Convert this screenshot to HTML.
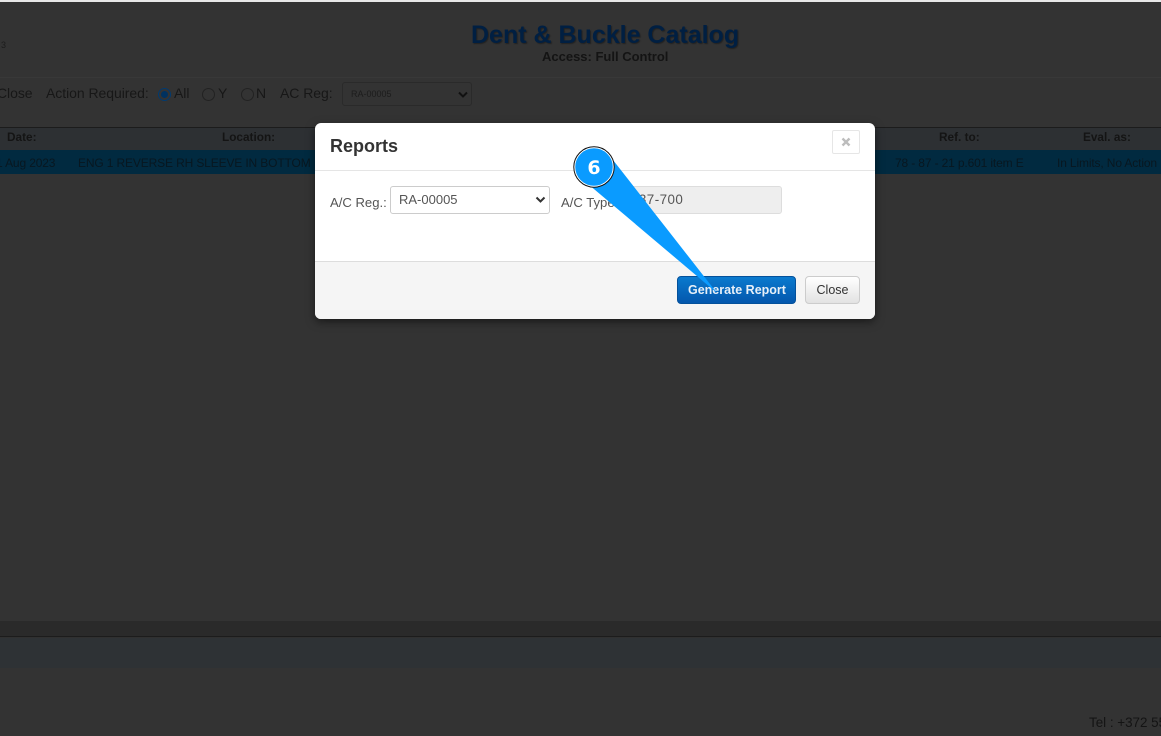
<!DOCTYPE html>
<html><head><meta charset="utf-8">
<style>
html,body{margin:0;padding:0;width:1161px;height:736px;overflow:hidden;background:#333;font-family:"Liberation Sans",sans-serif}
.a{position:absolute;white-space:nowrap}
.d{color:#161616}
.t{font-size:14px;line-height:16px;color:#171717;top:85px;letter-spacing:-.05px}
.h{font-size:11.8px;line-height:14px;font-weight:bold;color:#141414;top:130px}
.r{font-size:12px;line-height:14px;color:#081720;top:6px;letter-spacing:-.14px}
</style></head><body>
<div class="a" style="left:0;top:0;width:1161px;height:2px;background:#e8e8e8"></div>
<div class="a" style="left:1px;top:40px;font-size:9px;color:#1c1c1c">3</div>
<div class="a" style="left:471px;top:20px;font-size:25px;line-height:30px;font-weight:bold;color:#001f42;text-shadow:1px 1px 1px #222">Dent &amp; Buckle Catalog</div>
<div class="a" style="left:542px;top:49px;font-size:13px;line-height:15px;font-weight:bold;color:#141414;">Access: Full Control</div>
<div class="a" style="left:0;top:77px;width:1161px;height:1px;background:#383838"></div>

<div class="a t" style="left:-3px">Close</div>
<div class="a t" style="left:46px">Action Required:</div>
<div class="a" style="left:158px;top:88px;width:13px;height:13px;border-radius:50%;border:1px solid #003a70;box-sizing:border-box"></div>
<div class="a" style="left:161px;top:91px;width:7px;height:7px;border-radius:50%;background:#00315f"></div>
<div class="a t" style="left:174px">All</div>
<div class="a" style="left:202px;top:88px;width:13px;height:13px;border-radius:50%;border:1px solid #222;box-sizing:border-box"></div>
<div class="a t" style="left:218px">Y</div>
<div class="a" style="left:241px;top:88px;width:13px;height:13px;border-radius:50%;border:1px solid #222;box-sizing:border-box"></div>
<div class="a t" style="left:256px">N</div>
<div class="a t" style="left:280px">AC Reg:</div>
<div class="a" style="left:342px;top:82px;width:130px;height:24px;box-sizing:border-box;border:1px solid #2a2a2a;border-radius:3px"></div>
<div class="a" style="left:351px;top:89px;font-size:9px;line-height:11px;color:#1c1c1c">RA-00005</div>
<svg class="a" style="left:458px;top:91px" width="10" height="7" viewBox="0 0 10 7"><path d="M1 1.5L5 5.5L9 1.5" fill="none" stroke="#111" stroke-width="2"/></svg>

<div class="a" style="left:0;top:127px;width:1161px;height:1px;background:#1c1c1c"></div>
<div class="a" style="left:0;top:128px;width:1161px;height:22px;background:#2d3033"></div>
<div class="a h" style="left:7px">Date:</div>
<div class="a h" style="left:222px">Location:</div>
<div class="a h" style="left:939px">Ref. to:</div>
<div class="a h" style="left:1083px">Eval. as:</div>
<div class="a" style="left:0;top:150px;width:1161px;height:24px;background:#012a40;overflow:hidden">
<div class="a r" style="left:-4px">1 Aug 2023</div>
<div class="a r" style="left:78px">ENG 1 REVERSE RH SLEEVE IN BOTTOM</div>
<div class="a r" style="left:895px">78 - 87 - 21 p.601 item E</div>
<div class="a r" style="left:1057px">In Limits, No Action</div>
</div>

<div class="a" style="left:0;top:621px;width:1161px;height:15px;background:#2a2a2a"></div>
<div class="a" style="left:0;top:636px;width:1161px;height:1px;background:#1c1c1c"></div>
<div class="a" style="left:0;top:637px;width:1161px;height:1px;background:#303030"></div>
<div class="a" style="left:0;top:638px;width:1161px;height:30px;background:#2e3235"></div>
<div class="a" style="left:1089px;top:715px;font-size:13.4px;line-height:16px;color:#141414">Tel : +372 55</div>

<div class="a" style="left:315px;top:123px;width:560px;height:196px;background:#fff;border-radius:6px;overflow:hidden;box-shadow:0 3px 9px rgba(0,0,0,.5)">
 <div class="a" style="left:15px;top:13px;font-size:18px;line-height:20px;font-weight:bold;color:#333">Reports</div>
 <div class="a" style="left:517px;top:7px;width:28px;height:24px;box-sizing:border-box;border:1px solid #e6e6e6;border-radius:2px;background:#fff"></div>
 <svg class="a" style="left:526px;top:14px" width="10" height="10" viewBox="0 0 10 10"><path d="M1.5 1.5L8.5 8.5M8.5 1.5L1.5 8.5" stroke="#bdbdbd" stroke-width="2.4" fill="none"/></svg>
 <div class="a" style="left:0;top:47px;width:560px;height:1px;background:#e5e5e5"></div>
 <div class="a" style="left:15px;top:72px;font-size:13.1px;line-height:16px;color:#555">A/C Reg.:</div>
 <div class="a" style="left:75px;top:63px;width:160px;height:28px;box-sizing:border-box;border:1px solid #ccc;border-radius:3px;background:#fff"></div>
 <div class="a" style="left:84px;top:69px;font-size:13px;line-height:16px;color:#555">RA-00005</div>
 <svg class="a" style="left:220px;top:73px" width="11" height="8" viewBox="0 0 11 8"><path d="M1.5 1.5L5.5 5.5L9.5 1.5" fill="none" stroke="#333" stroke-width="2"/></svg>
 <div class="a" style="left:246px;top:72px;font-size:13.1px;line-height:16px;color:#555">A/C Type:</div>
 <div class="a" style="left:307px;top:63px;width:160px;height:28px;box-sizing:border-box;border:1px solid #ddd;border-radius:3px;background:#eee"></div>
 <div class="a" style="left:316px;top:69px;font-size:13.4px;line-height:16px;color:#555;letter-spacing:.45px">737-700</div>
 <div class="a" style="left:0;top:138px;width:560px;height:58px;box-sizing:border-box;border-top:1px solid #ddd;background:#f5f5f5"></div>
 <div class="a" style="left:362px;top:153px;width:119px;height:28px;box-sizing:border-box;border:1px solid #04519b;border-radius:4px;background:linear-gradient(#0a7ace,#0457ad)"></div>
 <div class="a" style="left:373px;top:159px;font-size:12.5px;line-height:16px;font-weight:bold;color:#e8f0f8">Generate Report</div>
 <div class="a" style="left:490px;top:153px;width:55px;height:28px;box-sizing:border-box;border:1px solid #ccc;border-radius:4px;background:linear-gradient(#fff,#e2e2e2);font-size:12.5px;line-height:26px;text-align:center;color:#333">Close</div>
</div>

<svg class="a" style="left:0;top:0" width="1161" height="736" viewBox="0 0 1161 736">
 <polygon points="613,160 717,293 588,184" fill="#0a9bff"/>
 <circle cx="594" cy="167" r="19.5" fill="#0a9bff" stroke="#fff" stroke-width="1.5"/>
 <circle cx="594" cy="167" r="20.2" fill="none" stroke="#111" stroke-width="1"/>
 <text x="594" y="174" text-anchor="middle" font-family="'DejaVu Sans',sans-serif" font-size="19" font-weight="bold" fill="#fff">6</text>
</svg>
</body></html>
